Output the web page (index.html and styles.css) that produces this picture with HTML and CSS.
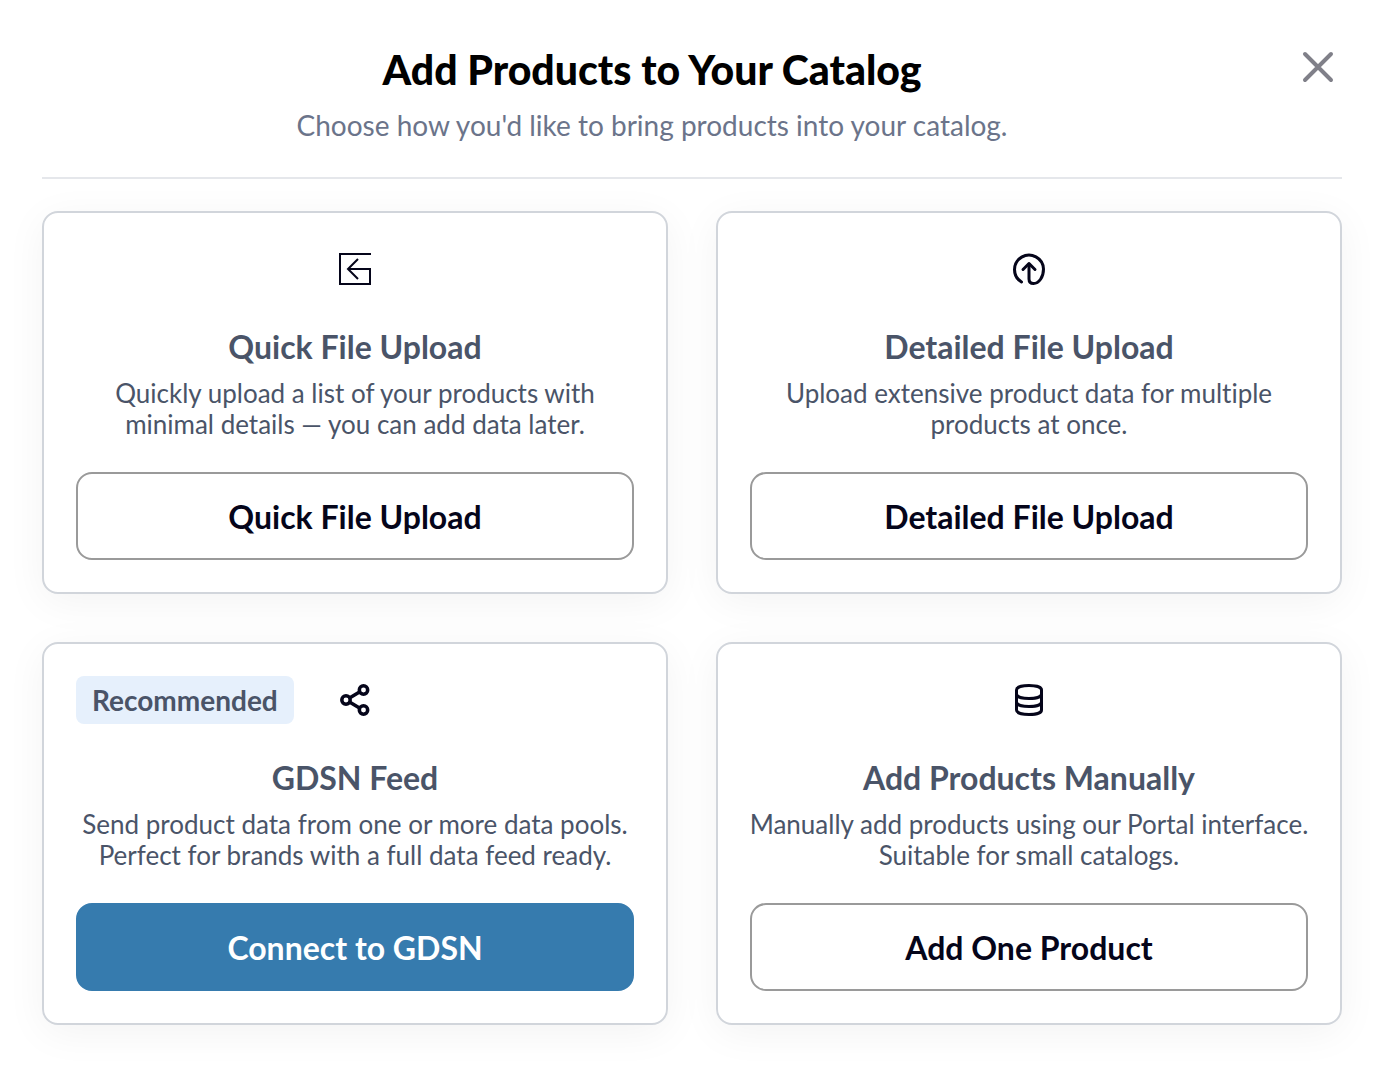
FILE: index.html
```html
<!DOCTYPE html>
<html lang="en">
<head>
    <meta charset="UTF-8">
    <meta name="viewport" content="width=device-width, initial-scale=1.0">
    <title>Add Products</title>
    <link rel="stylesheet" href="styles.css">
</head>
<body>

    <main class="modal">
        <!-- Header -->
        <header class="modal-header">
            <div class="modal-heading">
                <h1>Add Products to Your Catalog</h1>
                <p>Choose how you'd like to bring products into your catalog.</p>
            </div>
            <button type="button" class="close-button" aria-label="Close">
                <svg width="32" height="32" viewBox="0 0 32 32" fill="none" stroke="currentColor" stroke-width="4" stroke-linecap="round">
                    <path d="M3 3l26 26M29 3L3 29"/>
                </svg>
            </button>
        </header>

        <!-- Upload options -->
        <div class="options">
            <section class="card">
                <svg class="card-icon" viewBox="0 0 32 32" fill="none" stroke="currentColor" stroke-width="2">
                    <path d="M32 1H1v30h30V16H9"/>
                    <path d="M19 6L9 16l10 10"/>
                </svg>
                <h2>Quick File Upload</h2>
                <p>Quickly upload a list of your products with minimal details — you can add data later.</p>
                <button type="button" class="card-button">Quick File Upload</button>
            </section>

            <section class="card">
                <svg class="card-icon" viewBox="0 0 32 32" fill="none" stroke="currentColor" stroke-width="3" stroke-linecap="round" stroke-linejoin="round">
                    <path d="M8.500 29A14.500 14.500 0 1 1 30.500 16C30.500 24 26 30.500 20.500 30.500C17.500 30.500 16 28.500 16 26V11"/>
                    <path d="M10 16.500l6-6 6 6"/>
                </svg>
                <h2>Detailed File Upload</h2>
                <p>Upload extensive product data for multiple products at once.</p>
                <button type="button" class="card-button">Detailed File Upload</button>
            </section>

            <section class="card">
                <span class="badge">Recommended</span>
                <svg class="card-icon" viewBox="0 0 32 32" fill="none" stroke="currentColor" stroke-width="3.500">
                    <circle cx="24.500" cy="6" r="4.200"/>
                    <circle cx="7" cy="16" r="4.200"/>
                    <circle cx="24.500" cy="26" r="4.200"/>
                    <path d="M10.500 14l10-6M10.500 18l10 6"/>
                </svg>
                <h2>GDSN Feed</h2>
                <p>Send product data from one or more data pools. Perfect for brands with a full data feed ready.</p>
                <button type="button" class="card-button primary">Connect to GDSN</button>
            </section>

            <section class="card">
                <svg class="card-icon" viewBox="0 0 32 32" fill="none" stroke="currentColor" stroke-width="3">
                    <path d="M3.500 6C3.500 0 28.500 0 28.500 6V26C28.500 32 3.500 32 3.500 26Z"/>
                    <path d="M3.500 10C3.500 16 28.500 16 28.500 10M3.500 18C3.500 24 28.500 24 28.500 18"/>
                </svg>
                <h2>Add Products Manually</h2>
                <p>Manually add products using our Portal interface. Suitable for small catalogs.</p>
                <button type="button" class="card-button">Add One Product</button>
            </section>
        </div>
    </main>

</body>
</html>
```
FILE: styles.css
```css
* {
    box-sizing: border-box;
}

body {
    margin: 0;
    font-family: Lato, sans-serif;
    font-variant-ligatures: none;
    background-color: #fff;
}

h1, h2, p {
    margin: 0;
}

.modal {
    padding: 44px 44px 43px 42px;
}

/* Header */
.modal-header {
    display: flex;
    align-items: flex-start;
    padding-bottom: 34px;
    margin-bottom: 32px;
    border-bottom: 2px solid #e5e7eb;
}

.modal-heading {
    flex: 1;
    text-align: center;
}

.modal-heading h1 {
    font-size: 41px;
    line-height: 52px;
    font-weight: 900;
    color: #000;
}

.modal-heading p {
    margin-top: 11px;
    font-size: 28px;
    line-height: 36px;
    color: #6b748a;
}

.close-button {
    display: flex;
    width: 80px;
    padding: 7px 8px 0 40px;
    border: 0;
    background: none;
    color: #808089;
    cursor: pointer;
}

.close-button svg {
    flex-shrink: 0;
}

/* Option cards */
.options {
    display: grid;
    grid-template-columns: repeat(2, 1fr);
    gap: 48px;
}

.card {
    position: relative;
    display: flex;
    flex-direction: column;
    align-items: center;
    padding: 40px 32px 32px;
    border: 2px solid #d1d5db;
    border-radius: 16px;
    background-color: #fff;
    box-shadow: 0 8px 40px rgba(0, 0, 0, 0.05);
    text-align: center;
    color: #4a5468;
}

.card-icon {
    width: 32px;
    height: 32px;
    margin-bottom: 40px;
    color: #05051a;
}

.card h2 {
    font-size: 32px;
    line-height: 44px;
    font-weight: 700;
}

.card p {
    align-self: stretch;
    margin: 9px -6px 0;
    font-size: 26px;
    line-height: 31px;
}

.card-button {
    width: 100%;
    height: 88px;
    margin-top: 32px;
    border: 2px solid #9a9a9a;
    border-radius: 16px;
    background-color: #fff;
    color: #05051a;
    font-family: inherit;
    font-size: 32px;
    font-weight: 700;
    cursor: pointer;
}

.card-button.primary {
    border-color: #367bae;
    background-color: #367bae;
    color: #fff;
}

.badge {
    position: absolute;
    top: 32px;
    left: 32px;
    padding: 6px 16px;
    border-radius: 8px;
    background-color: #e6f0fc;
    font-size: 28px;
    line-height: 36px;
    font-weight: 700;
}
```
